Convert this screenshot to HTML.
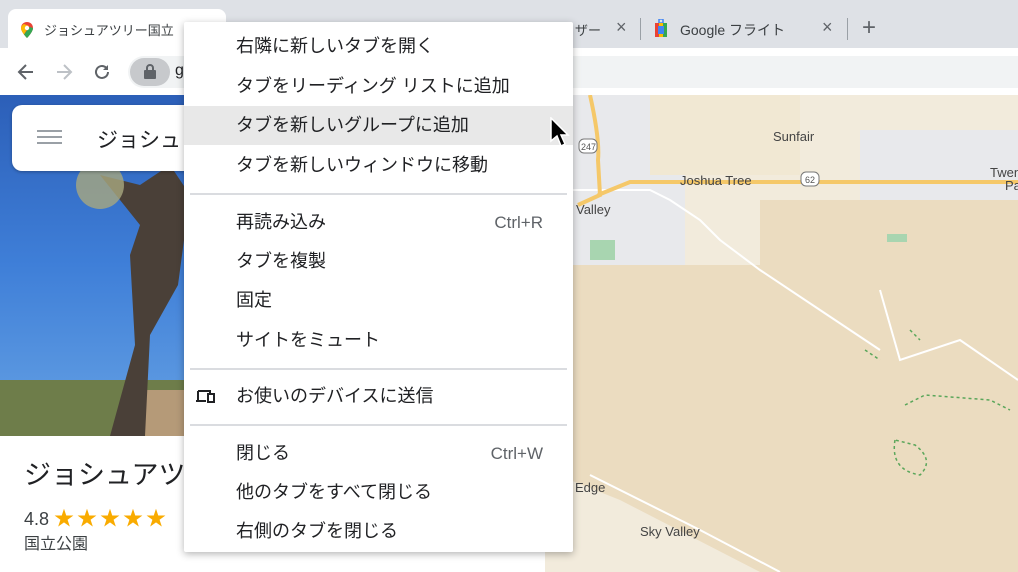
<!DOCTYPE html>
<html><head><meta charset="utf-8"><style>
*{margin:0;padding:0;box-sizing:border-box}
body{width:1018px;height:572px;overflow:hidden;position:relative;background:#fff;font-family:"Liberation Sans","Noto Sans CJK JP",sans-serif;color:#202124}
.abs{position:absolute}
.item{position:absolute;left:0;width:389px;height:39px;font-size:18px;line-height:39px;padding-left:52px;color:#202124}
.sc{position:absolute;right:30px;top:0;color:#5f6368;font-size:17px}
.sep{position:absolute;left:6px;right:6px;height:2px;background:#dadce0}
</style></head><body>
<div class="abs" style="left:0;top:0;width:1018px;height:48px;background:#dee1e6"></div>
<div class="abs" style="left:8px;top:9px;width:218px;height:40px;background:#fff;border-radius:8px 8px 0 0"></div>
<svg class="abs" style="left:20px;top:22px" width="14" height="16" viewBox="0 0 14 16"><path d="M7 0C3.5 0 1 2.6 1 6c0 4 6 10 6 10s6-6 6-10C13 2.6 10.5 0 7 0z" fill="#ea4335"/><path d="M1 6c0 2 1.5 4.5 3 6.5L9 4 4 2C2 3 1 4.5 1 6z" fill="#fbbc04"/><path d="M7 16s-1.7-1.7-3-3.5L9.5 5 13 6c0 4-6 10-6 10z" fill="#34a853"/><circle cx="7" cy="6" r="2.2" fill="#fff"/></svg>
<div class="abs" style="left:44px;top:20px;font-size:13px;color:#3c4043">ジョシュアツリー国立</div>
<div class="abs" style="left:575px;top:20px;font-size:13px;color:#3c4043">ザー</div>
<div class="abs" style="left:616px;top:17px;font-size:18px;color:#5f6368">×</div>
<div class="abs" style="left:640px;top:18px;width:1px;height:22px;background:#9aa0a6"></div>
<svg class="abs" style="left:654px;top:19px" width="14" height="20"><rect x="5" y="0" width="4" height="4" fill="none" stroke="#4285f4" stroke-width="1.5"/><rect x="1" y="4" width="12" height="14" rx="2" fill="#fbbc04"/><rect x="1" y="4" width="4" height="14" fill="#ea4335"/><rect x="9" y="4" width="4" height="14" fill="#34a853"/><rect x="4" y="7" width="6" height="8" fill="#4285f4"/></svg>
<div class="abs" style="left:680px;top:20px;font-size:14px;color:#3c4043">Google フライト</div>
<div class="abs" style="left:822px;top:17px;font-size:18px;color:#5f6368">×</div>
<div class="abs" style="left:847px;top:18px;width:1px;height:22px;background:#9aa0a6"></div>
<div class="abs" style="left:862px;top:14px;font-size:24px;color:#5f6368">+</div>
<div class="abs" style="left:0;top:48px;width:1018px;height:47px;background:#fff"></div>
<svg class="abs" style="left:16px;top:62px" width="20" height="20" viewBox="0 0 20 20"><path d="M17 10H4M10 3l-7 7 7 7" stroke="#5f6368" stroke-width="2" fill="none"/></svg>
<svg class="abs" style="left:54px;top:62px" width="20" height="20" viewBox="0 0 20 20"><path d="M3 10h13M10 3l7 7-7 7" stroke="#bdc1c6" stroke-width="2" fill="none"/></svg>
<svg class="abs" style="left:92px;top:62px" width="20" height="20" viewBox="0 0 20 20"><path d="M16 10a6 6 0 1 1-2-4.5" stroke="#5f6368" stroke-width="2" fill="none"/><path d="M16 3v5h-5z" fill="#5f6368"/></svg>
<div class="abs" style="left:128px;top:56px;width:890px;height:32px;background:#f1f3f4;border-radius:16px 0 0 16px"></div>
<div class="abs" style="left:130px;top:58px;width:40px;height:28px;background:#c7c9cc;border-radius:14px"></div>
<svg class="abs" style="left:144px;top:64px" width="12" height="16"><rect x="0" y="6" width="12" height="9" rx="1" fill="#5f6368"/><path d="M3 7V4a3 3 0 0 1 6 0v3" stroke="#5f6368" stroke-width="2" fill="none"/></svg>
<div class="abs" style="left:175px;top:62px;font-size:16px;color:#202124">g</div>
<div class="abs" style="left:0;top:95px;width:545px;height:341px;background:linear-gradient(180deg,#2c5fb8 0%,#3f7fd8 50%,#5a97e0 85%)"></div>
<div class="abs" style="left:0;top:380px;width:200px;height:56px;background:#6e7d4a"></div>
<div class="abs" style="left:140px;top:390px;width:44px;height:46px;background:#b59a78"></div>
<svg class="abs" style="left:60px;top:165px" width="130" height="271"><path d="M40 10 L80 20 L110 0 L130 30 L118 120 L90 170 L85 271 L50 271 L75 180 L70 90 L80 60z" fill="#4a4038"/><circle cx="40" cy="20" r="24" fill="#a8a880" opacity=".8"/></svg>
<div class="abs" style="left:12px;top:105px;width:230px;height:66px;background:#fff;border-radius:10px;box-shadow:0 1px 3px rgba(0,0,0,.3)"></div>
<div class="abs" style="left:37px;top:130px;width:25px;height:2px;background:#9aa0a6;box-shadow:0 6px 0 #9aa0a6,0 12px 0 #9aa0a6"></div>
<div class="abs" style="left:97px;top:124px;font-size:21px">ジョシュ</div>
<div class="abs" style="left:0;top:436px;width:545px;height:136px;background:#fff"></div>
<div class="abs" style="left:24px;top:453px;font-size:27px">ジョシュアツ</div>
<div class="abs" style="left:24px;top:502px;font-size:18px;color:#3c4043">4.8 <span style="color:#f9ab00;font-size:20px;letter-spacing:3px">★★★★★</span></div>
<div class="abs" style="left:24px;top:530px;font-size:16px;color:#3c4043">国立公園</div>
<svg class="abs" style="left:545px;top:95px" width="473" height="477" viewBox="545 95 473 477">
<rect x="545" y="95" width="473" height="477" fill="#f2ebdc"/>
<rect x="545" y="95" width="140" height="170" fill="#e8e9ec"/>
<rect x="650" y="95" width="150" height="80" fill="#f1e8d3"/>
<rect x="860" y="130" width="158" height="75" fill="#e8e9ec"/>
<path d="M545 265 L760 265 L760 200 L1018 200 L1018 572 L760 572 L620 500 L545 470z" fill="#ebdcc0"/>
<path d="M545 190 L650 190 L670 200 L700 220 L720 240 L760 270 L820 310 L880 350" stroke="#fff" stroke-width="2" fill="none"/>
<path d="M880 290 L900 360 L960 340 L1018 380" stroke="#fff" stroke-width="2" fill="none"/>
<path d="M590 475 L700 530 L780 572" stroke="#fff" stroke-width="2" fill="none"/>
<path d="M590 95 Q600 140 598 160 L600 195 L578 205 M598 195 L630 182 L1018 182" stroke="#f5c869" stroke-width="4" fill="none"/>
<rect x="590" y="240" width="25" height="20" fill="#a8d5b0"/>
<rect x="887" y="234" width="20" height="8" fill="#a8d5b0"/>
<path d="M895 440 Q890 470 920 475 Q935 460 915 445z M910 330 L920 340 M865 350 L880 360 M905 405 L925 395 L990 400 L1010 410" stroke="#5aa65a" stroke-width="1.5" stroke-dasharray="3 3" fill="none"/>
<g font-family="Liberation Sans" font-size="13" fill="#444">
<text x="773" y="141">Sunfair</text><text x="680" y="185">Joshua Tree</text><text x="576" y="214">Valley</text><text x="990" y="177">Twen</text><text x="1005" y="190">Pa</text><text x="575" y="492">Edge</text><text x="640" y="536">Sky Valley</text></g>
<rect x="579" y="139" width="18" height="14" rx="5" fill="#fff" stroke="#777"/><text x="581" y="150" font-size="9" font-family="Liberation Sans" fill="#555">247</text>
<rect x="801" y="172" width="18" height="14" rx="5" fill="#fff" stroke="#777"/><text x="805" y="183" font-size="9" font-family="Liberation Sans" fill="#555">62</text>
</svg>
<div class="abs" style="left:184px;top:22px;width:389px;height:530px;background:#fff;box-shadow:0 2px 8px rgba(0,0,0,.3);border-radius:2px">
<div class="item" style="top:5px">右隣に新しいタブを開く</div>
<div class="item" style="top:45px">タブをリーディング リストに追加</div>
<div class="item" style="top:84px;background:#e8e8e8">タブを新しいグループに追加</div>
<div class="item" style="top:124px">タブを新しいウィンドウに移動</div>
<div class="sep" style="top:171px"></div>
<div class="item" style="top:181px">再読み込み<span class="sc">Ctrl+R</span></div>
<div class="item" style="top:220px">タブを複製</div>
<div class="item" style="top:259px">固定</div>
<div class="item" style="top:299px">サイトをミュート</div>
<div class="sep" style="top:346px"></div>
<div class="item" style="top:355px">お使いのデバイスに送信</div>
<svg class="abs" style="left:12px;top:368px" width="20" height="14"><path d="M2 1h12v2M2 1v10M0 11h10" stroke="#202124" stroke-width="2" fill="none"/><rect x="12" y="4" width="6" height="8" fill="none" stroke="#202124" stroke-width="2"/></svg>
<div class="sep" style="top:402px"></div>
<div class="item" style="top:412px">閉じる<span class="sc">Ctrl+W</span></div>
<div class="item" style="top:451px">他のタブをすべて閉じる</div>
<div class="item" style="top:490px">右側のタブを閉じる</div>
</div>
<svg class="abs" style="left:550px;top:117px" width="20" height="32"><path d="M1 1 L1 24 L7 19 L11 29 L15 27 L11 18 L18 18z" fill="#000" stroke="#fff" stroke-width="1.5"/></svg>
</body></html>
